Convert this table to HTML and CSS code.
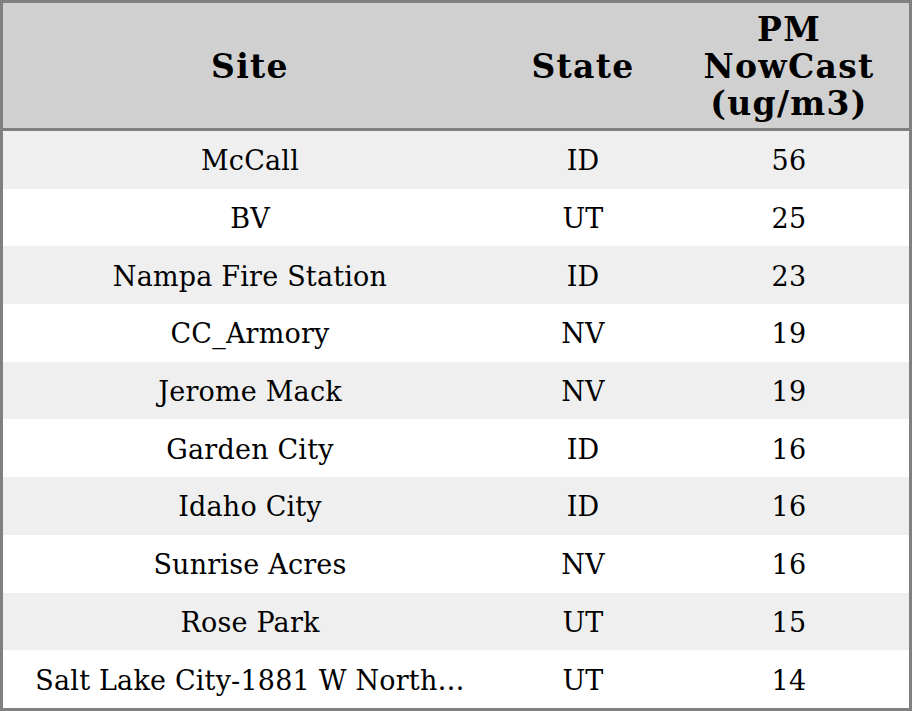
FILE: index.html
```html
<!DOCTYPE html>
<html>
<head>
<meta charset="utf-8">
<link rel="stylesheet" href="styles.css">
</head>
<body>
<table class="aq-table">
  <thead>
    <tr>
      <th class="col-site">Site</th>
      <th class="col-state">State</th>
      <th class="col-pm">PM<br>NowCast<br>(ug/m3)</th>
    </tr>
  </thead>
  <tbody>
    <tr><td>McCall</td><td>ID</td><td>56</td></tr>
    <tr><td>BV</td><td>UT</td><td>25</td></tr>
    <tr><td>Nampa Fire Station</td><td>ID</td><td>23</td></tr>
    <tr><td>CC_Armory</td><td>NV</td><td>19</td></tr>
    <tr><td>Jerome Mack</td><td>NV</td><td>19</td></tr>
    <tr><td>Garden City</td><td>ID</td><td>16</td></tr>
    <tr><td>Idaho City</td><td>ID</td><td>16</td></tr>
    <tr><td>Sunrise Acres</td><td>NV</td><td>16</td></tr>
    <tr><td>Rose Park</td><td>UT</td><td>15</td></tr>
    <tr><td>Salt Lake City-1881 W North…</td><td>UT</td><td>14</td></tr>
  </tbody>
</table>
</body>
</html>
```

FILE: styles.css
```css
html, body {
  margin: 0;
  padding: 0;
  background: #ffffff;
}

.aq-table {
  width: 912px;
  height: 711px;
  border-collapse: separate;
  border-spacing: 0;
  border: 3px solid #808080;
  box-sizing: border-box;
  table-layout: fixed;
  font-family: "DejaVu Serif", serif;
  color: #000;
}

.aq-table th {
  box-sizing: border-box;
  background: #d0d0d0;
  font-size: 33px;
  font-weight: bold;
  line-height: 37px;
  letter-spacing: 1.3px;
  text-align: center;
  vertical-align: middle;
  height: 128px;
  padding: 2px 0 0 0;
  border-bottom: 3px solid #808080;
}

.col-site { width: 494px; }
.col-state { width: 172px; }
.col-pm { width: 240px; }

.aq-table td {
  box-sizing: border-box;
  font-size: 27px;
  letter-spacing: 0.2px;
  text-align: center;
  vertical-align: middle;
  height: 57.6px;
  padding: 2px 0 0 0;
  white-space: nowrap;
}

.aq-table tbody tr:nth-child(odd) td {
  background: #efefef;
}
```
